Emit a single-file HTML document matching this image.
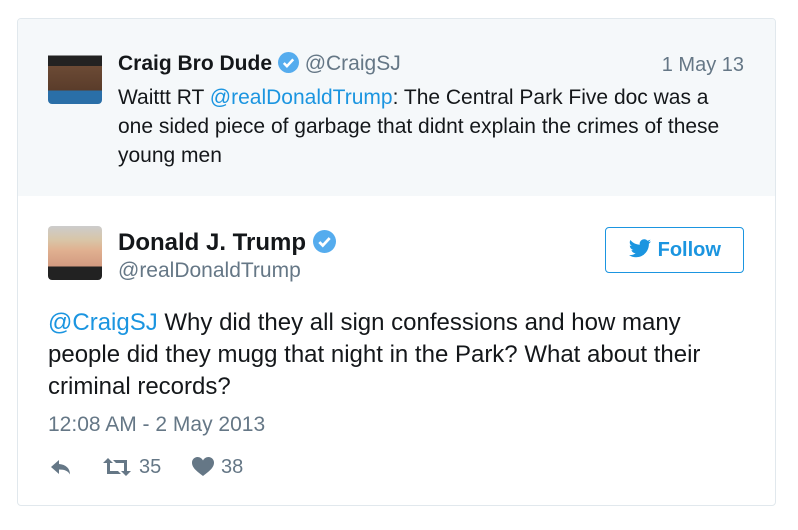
<!DOCTYPE html><html><head><style>
body{margin:0;background:#fff;font-family:"Liberation Sans",sans-serif;width:798px;height:530px;position:relative;overflow:hidden}
.card{position:absolute;left:17px;top:18px;width:757px;height:486px;border:1px solid #e1e8ed;border-radius:4px;overflow:hidden}
.top{position:absolute;left:0;top:0;width:757px;height:177px;background:#f5f8fa}
.a{position:absolute}
.chk{display:inline-block;vertical-align:-3px}
</style></head><body><div class="card"><div class="top"></div></div>
<div class="a" style="left:48px;top:50px;width:54px;height:54px;border-radius:4px;background:linear-gradient(#f5f8fa 0,#f5f8fa 10%,#222 10%,#222 30%,#6b4a35 30%,#5a3c2a 75%,#2a6fa8 75%)"></div>
<div class="a" style="left:118px;top:52px;font-size:21px;color:#14171a;white-space:nowrap"><b>Craig Bro Dude</b> <svg class="chk" width="21" height="21" viewBox="0 0 20 20"><circle cx="10" cy="10" r="10" fill="#55acee"/><path d="M5.5 10.5l3 3 6-6.5" stroke="#fff" stroke-width="2.4" fill="none"/></svg> <span style="color:#657786">@CraigSJ</span></div>
<div class="a" style="right:54px;top:54px;font-size:20px;color:#657786">1 May 13</div>
<div class="a" style="left:118px;top:83px;width:615px;font-size:21px;line-height:29px;color:#14171a">Waittt RT <span style="color:#1b95e0">@realDonaldTrump</span>: The Central Park Five doc was a one sided piece of garbage that didnt explain the crimes of these young men</div>
<div class="a" style="left:48px;top:226px;width:54px;height:54px;border-radius:4px;background:linear-gradient(#ccc 0,#d8c6a8 25%,#e0b090 45%,#d29a80 75%,#222 75%)"></div>
<div class="a" style="left:118px;top:229px;font-size:24px;color:#14171a;white-space:nowrap"><b>Donald J. Trump</b> <svg class="chk" width="23" height="23" viewBox="0 0 20 20"><circle cx="10" cy="10" r="10" fill="#55acee"/><path d="M5.5 10.5l3 3 6-6.5" stroke="#fff" stroke-width="2.4" fill="none"/></svg></div>
<div class="a" style="left:118px;top:259px;font-size:21px;color:#657786">@realDonaldTrump</div>
<div class="a" style="left:605px;top:227px;width:137px;height:44px;border:1px solid #1b95e0;border-radius:4px;color:#1b95e0;font-size:20px;font-weight:bold;line-height:44px;text-align:center"><svg width="24" height="20" viewBox="0 0 24 20" style="vertical-align:-3px"><path d="M23 2.4a9 9 0 0 1-2.6.7 4.6 4.6 0 0 0 2-2.5 9 9 0 0 1-2.9 1.1A4.5 4.5 0 0 0 11.8 5.8 12.9 12.9 0 0 1 2.4 1 4.5 4.5 0 0 0 3.8 7.1 4.5 4.5 0 0 1 1.8 6.5a4.5 4.5 0 0 0 3.6 4.5 4.5 4.5 0 0 1-2 .1 4.6 4.6 0 0 0 4.2 3.1A9.1 9.1 0 0 1 1 16.1 12.8 12.8 0 0 0 8 18.2c8.3 0 12.9-6.9 12.9-12.9v-.6A9.2 9.2 0 0 0 23 2.4z" fill="#1b95e0"/></svg> Follow</div>
<div class="a" style="left:48px;top:307px;width:700px;font-size:24px;line-height:32px;color:#14171a"><span style="color:#1b95e0">@CraigSJ</span> Why did they all sign confessions and how many people did they mugg that night in the Park? What about their criminal records?</div>
<div class="a" style="left:48px;top:413px;font-size:21px;color:#657786">12:08 AM - 2 May 2013</div>
<svg class="a" style="left:50px;top:459px" width="24" height="18" viewBox="0 0 24 18"><path d="M9 1L1 8l8 7v-4.5c6 0 9 1.5 11 5 0-6-4-10-11-10.5z" fill="#657786"/></svg>
<svg class="a" style="left:103px;top:457px" width="28" height="20" viewBox="0 0 28 20"><path d="M5 1l5 5H7v8h8l3 3H4V6H0zM23 19l-5-5h3V6h-8l-3-3h14v11h4z" fill="#657786"/></svg>
<div class="a" style="left:139px;top:456px;font-size:20px;color:#657786">35</div>
<svg class="a" style="left:192px;top:457px" width="22" height="20" viewBox="0 0 22 20"><path d="M11 19C3 13 0 10 0 5.5 0 2.5 2.5 0 5.5 0 8 0 10 1.5 11 3.5 12 1.5 14 0 16.5 0 19.5 0 22 2.5 22 5.5 22 10 19 13 11 19z" fill="#657786"/></svg>
<div class="a" style="left:221px;top:456px;font-size:20px;color:#657786">38</div>
</body></html>
